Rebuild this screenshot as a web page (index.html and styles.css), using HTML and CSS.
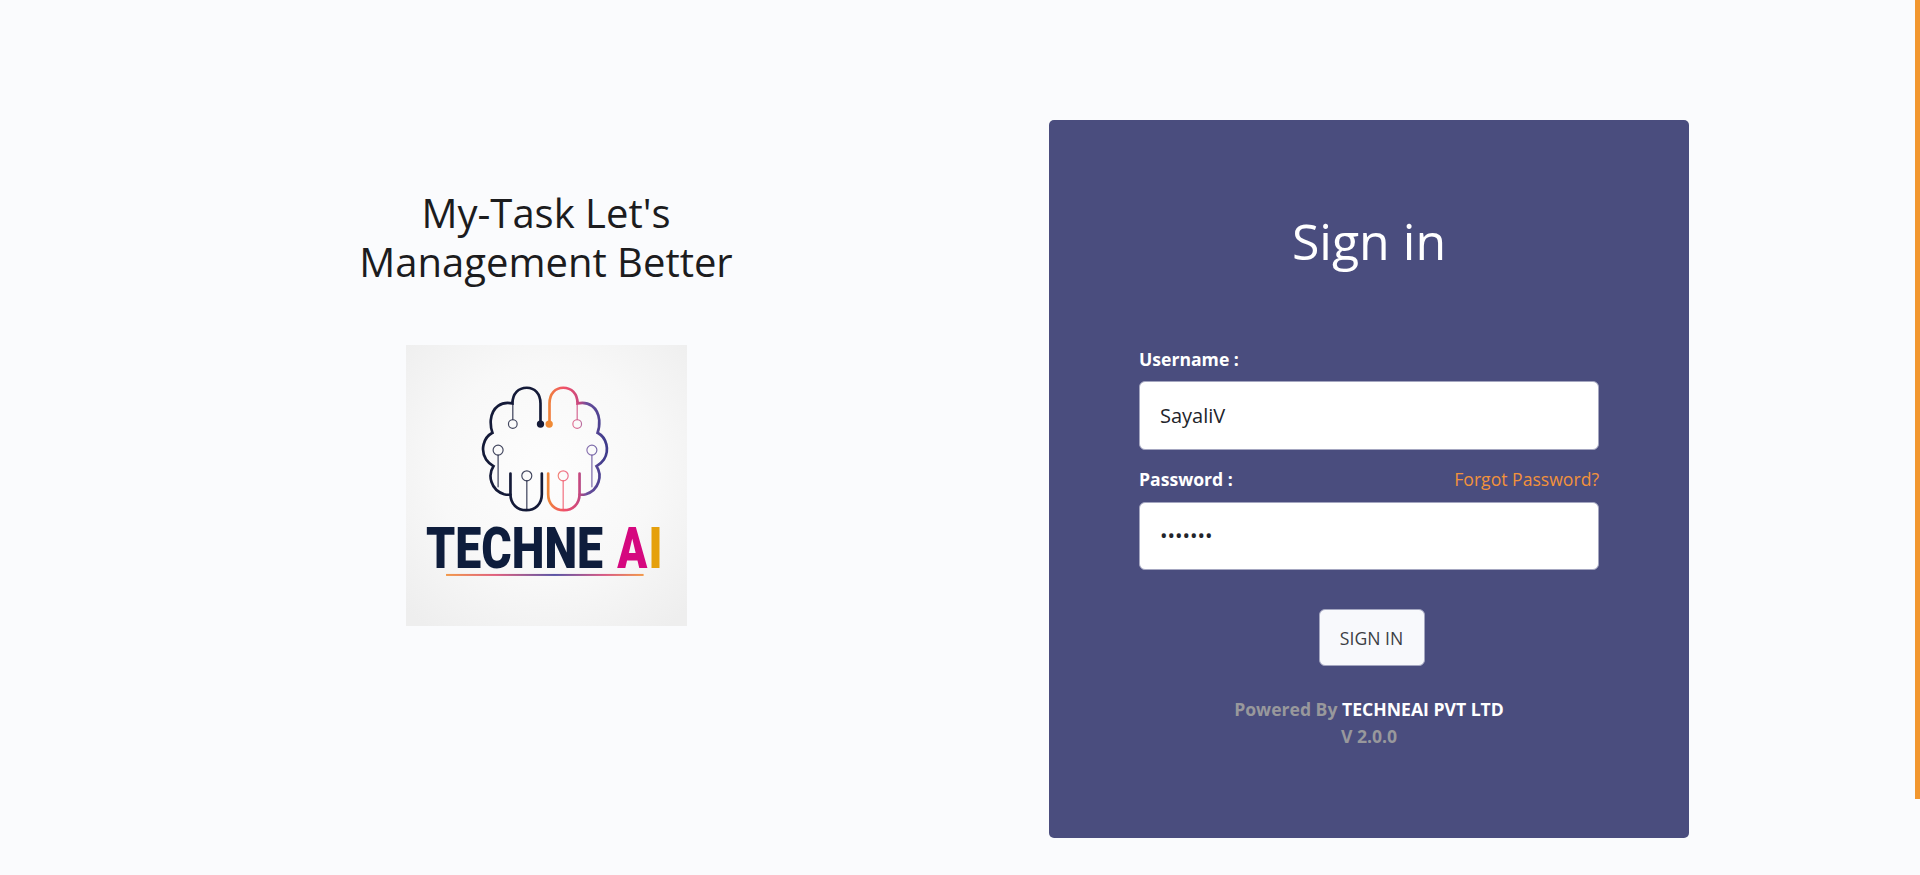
FILE: index.html
```html
<!DOCTYPE html>
<html lang="en">

<head>
    <meta charset="UTF-8" />
    <title>My-Task</title>
    <link rel="stylesheet" href="styles.css">
</head>

<body>
    <div class="scroll-thumb"></div>
    <main class="page">
        <section class="brand">
            <h1>My-Task Let's<br>Management Better</h1>
            <svg class="logo" viewBox="18 15 842 842" role="img" aria-label="Techne AI">
                <defs>
                    <radialGradient id="logo-bg" cx="50%" cy="45%" r="70%">
                        <stop offset="0" stop-color="#fdfdfd" />
                        <stop offset="0.55" stop-color="#f8f8f8" />
                        <stop offset="1" stop-color="#eeeeee" />
                    </radialGradient>
                    <!-- right half is the left half mirrored, so x runs backwards here -->
                    <linearGradient id="brain-right" gradientUnits="userSpaceOnUse" x1="429" y1="0" x2="254" y2="0">
                        <stop offset="0" stop-color="#f08a35" />
                        <stop offset="0.3" stop-color="#f0506a" />
                        <stop offset="0.55" stop-color="#c8487f" />
                        <stop offset="0.68" stop-color="#6d4f9c" />
                        <stop offset="1" stop-color="#3f3c8c" />
                    </linearGradient>
                    <linearGradient id="underline" gradientUnits="userSpaceOnUse" x1="138" y1="0" x2="730" y2="0">
                        <stop offset="0" stop-color="#f2994a" />
                        <stop offset="0.25" stop-color="#e0607e" />
                        <stop offset="0.55" stop-color="#5a55a5" />
                        <stop offset="0.8" stop-color="#d85a85" />
                        <stop offset="1" stop-color="#f2994a" />
                    </linearGradient>
                    <g id="brain-half">
                        <path class="brain-main" d="M421 252V190C421 160 403 143 380 143C355 143 337 160 337 190C305 183 276 200 272 240C271 258 273 268 277 278C250 292 240 330 258 358C264 367 272 373 280 378C262 405 272 450 312 462C320 464 326 464 331 463" />
                        <path class="brain-main" d="M331 400V462C331 492 352 510 378 510C405 510 425 492 425 462V400" />
                        <path class="brain-thin" d="M338 190V239" />
                        <path class="brain-thin" d="M294 344V440" />
                        <path class="brain-thin" d="M380 421V508" />
                        <circle class="brain-node" cx="338" cy="252" r="13" />
                        <circle class="brain-node" cx="294" cy="330" r="15" />
                        <circle class="brain-node" cx="380" cy="407" r="15" />
                    </g>
                </defs>
                <rect x="18" y="15" width="842" height="842" fill="url(#logo-bg)" />
                <g stroke="#141a38">
                    <use href="#brain-half" />
                    <circle class="brain-dot" cx="421" cy="252" r="11" fill="#141a38" />
                </g>
                <g stroke="url(#brain-right)">
                    <use href="#brain-half" transform="matrix(-1 0 0 1 869 0)" />
                    <circle class="brain-dot" cx="447" cy="252" r="11" fill="#f08a35" />
                </g>
                <text class="logo-word" transform="translate(78 682) scale(0.8 1)">TECHNE</text>
                <text class="logo-a" transform="translate(651 682) scale(0.76 1)">A</text>
                <text class="logo-i" transform="translate(745 682) scale(0.8 1)">I</text>
                <rect x="138" y="701" width="592" height="6" fill="url(#underline)" />
            </svg>
        </section>

        <section class="card">
            <h2>Sign in</h2>
            <form class="login-form">
                <div class="field">
                    <div class="field-head"><label for="username">Username :</label></div>
                    <input id="username" type="text" value="SayaliV" />
                </div>
                <div class="field">
                    <div class="field-head">
                        <label for="password">Password :</label>
                        <a href="#">Forgot Password?</a>
                    </div>
                    <input id="password" type="password" value="1234567" />
                </div>
                <button type="button">SIGN IN</button>
            </form>
            <p class="powered">Powered By <strong>TECHNEAI PVT LTD</strong><br>V 2.0.0</p>
        </section>
    </main>
</body>

</html>
```

FILE: styles.css
```css
* {
    box-sizing: border-box;
}

body {
    margin: 0;
    height: 875px;
    background: #fafbfd;
    font-family: 'Open Sans', 'Liberation Sans', sans-serif;
    color: #1c1c1e;
}

.scroll-thumb {
    position: fixed;
    top: 0;
    right: 0;
    width: 5px;
    height: 799px;
    background: #f2972f;
}

.page {
    display: grid;
    grid-template-columns: 640px 640px;
    column-gap: 183px;
    padding: 120px 0 0 226px;
}

.brand {
    display: flex;
    flex-direction: column;
    align-items: center;
    padding-top: 68px;
}

h1 {
    margin: 0 0 59px 0;
    font-size: 40px;
    font-weight: 400;
    line-height: 49px;
    text-align: center;
}

.logo {
    display: block;
    width: 281px;
    height: 281px;
    filter: blur(0.35px);
}

.brain-main,
.brain-thin {
    fill: none;
    stroke-linecap: round;
}

.brain-main {
    stroke-width: 8;
}

.brain-thin {
    stroke-width: 4;
    opacity: 0.75;
}

.brain-node {
    fill: #fbfbfb;
    stroke-width: 3.5;
    opacity: 0.8;
}

.brain-dot {
    stroke: none;
}

.logo-word,
.logo-a,
.logo-i {
    font-family: Roboto, 'Liberation Sans', sans-serif;
    font-size: 174px;
    font-weight: 900;
}

.logo-word {
    fill: #0e1d3c;
}

.logo-a {
    fill: #d5087f;
}

.logo-i {
    fill: #e5a00c;
}

.card {
    display: flex;
    flex-direction: column;
    align-items: center;
    height: 718px;
    padding: 91px 90px 0 90px;
    background: #4a4d7e;
    border-radius: 5px;
}

h2 {
    margin: 0 0 76px 0;
    color: #fff;
    font-size: 50px;
    font-weight: 400;
    line-height: 60px;
    text-align: center;
}

.login-form {
    display: flex;
    flex-direction: column;
    width: 100%;
}

.field {
    margin-bottom: 17px;
}

.field-head {
    display: flex;
    justify-content: space-between;
    align-items: center;
    height: 24px;
    margin-bottom: 10px;
}

.field + .field .field-head {
    margin-bottom: 11px;
}

label {
    color: #fff;
    font-size: 17.6px;
    font-weight: 700;
}

.field-head a {
    color: #f2923b;
    font-size: 17.6px;
    text-decoration: none;
}

input {
    display: block;
    width: 100%;
    height: 68.5px;
    padding: 0 20px;
    background: #fff;
    border: 1px solid #a4a6c0;
    border-radius: 6px;
    color: #22242a;
    font-family: inherit;
    font-size: 20px;
}

button {
    align-self: center;
    width: 106px;
    height: 57px;
    margin: 22px 0 0 5px;
    background: #f8f9fc;
    border: 1px solid #a4a6c0;
    border-radius: 6px;
    color: #3c3e44;
    font-family: inherit;
    font-size: 17.6px;
}

.powered {
    margin: 30px 0 0 0;
    color: #98989c;
    font-size: 17.6px;
    font-weight: 700;
    line-height: 27px;
    text-align: center;
}

.powered strong {
    color: #fff;
    font-weight: 700;
}
```
